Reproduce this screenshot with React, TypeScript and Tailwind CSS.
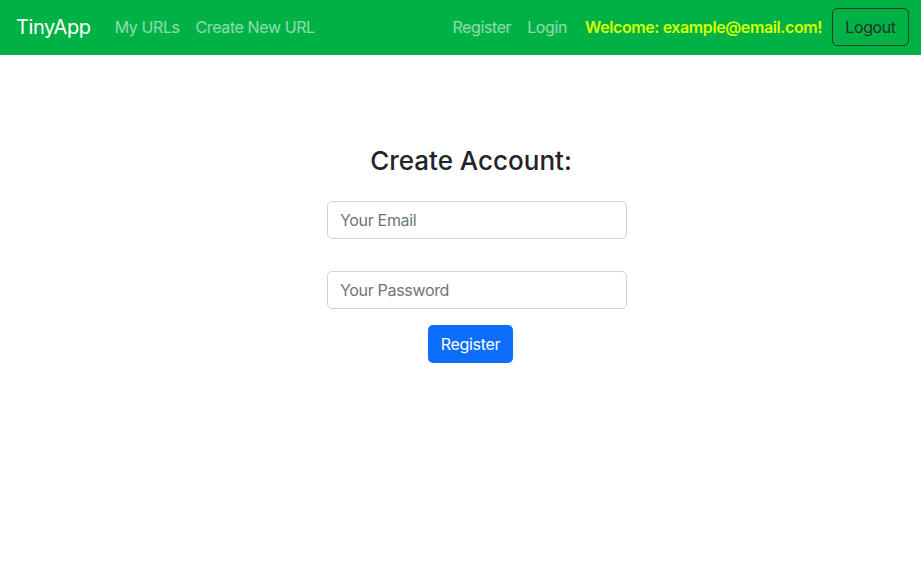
import React from 'react';

export default function App() {
    return (
        <div className="min-h-[564px] bg-white font-['Inter','Liberation_Sans',sans-serif] text-[#212529]">
            {/* navbar */}
            <nav className="flex h-[55px] items-center bg-[#00b246] pb-[1px] pl-4 pr-3 tracking-[-0.025em]">
                <span className="mr-4 text-[20px] text-white">TinyApp</span>
                <a className="px-2 text-[16px] text-white/55">My URLs</a>
                <a className="px-2 text-[16px] text-white/55">Create New URL</a>
                <div className="ml-auto flex items-center">
                    <a className="px-2 text-[16px] text-white/55">Register</a>
                    <a className="px-2 text-[16px] text-white/55">Login</a>
                    <span className="ml-[10px] text-[16px] font-semibold text-[#d4ff00]">
                        Welcome: example@email.com!
                    </span>
                    <button className="ml-[10px] h-[38px] w-[77px] rounded-[5px] border border-[#2b3b33] text-[16px] text-[#24332b]">
                        Logout
                    </button>
                </div>
            </nav>

            <main className="flex flex-col items-center pl-[33px] pt-[90px]">
                <h3 className="mr-[12px] text-[26px] font-medium leading-[32px]">Create Account:</h3>
                <form className="mt-[24px] flex w-[300px] flex-col tracking-[-0.02em]">
                    <input
                        className="h-[38px] rounded-[5px] border border-[#ced4da] px-3 text-[16px] placeholder:text-[#6c757d]"
                        placeholder="Your Email"
                    />
                    <input
                        className="mt-[32px] h-[38px] rounded-[5px] border border-[#ced4da] px-3 text-[16px] placeholder:text-[#6c757d]"
                        placeholder="Your Password"
                        type="password"
                    />
                    <button
                        type="button"
                        className="mr-[13px] mt-[16px] h-[38px] w-[85px] self-center rounded-[5px] bg-[#0d6efd] text-[16px] text-white"
                    >
                        Register
                    </button>
                </form>
            </main>
        </div>
    );
}
